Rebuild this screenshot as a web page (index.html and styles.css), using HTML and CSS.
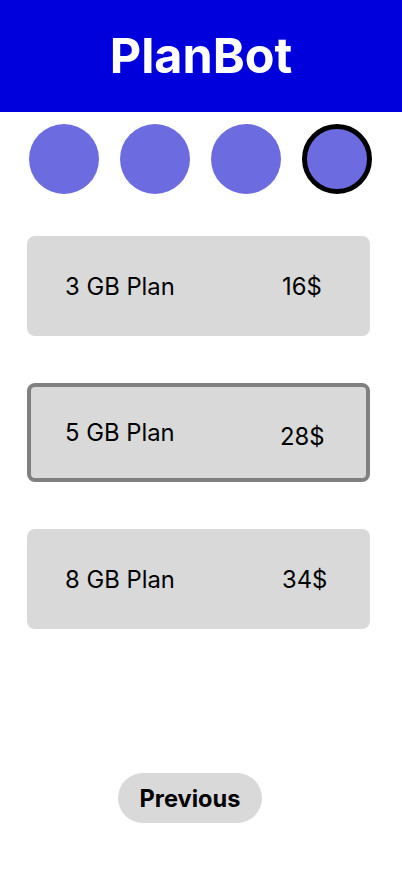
FILE: index.html
```html
<!DOCTYPE html>
<html>
<head>
<meta charset="utf-8">
<link rel="stylesheet" href="styles.css">
</head>
<body>
<header class="header"><h1 class="title">PlanBot</h1></header>
<div class="steps">
  <span class="step"></span>
  <span class="step"></span>
  <span class="step"></span>
  <span class="step step-active"></span>
</div>
<div class="plans">
  <div class="plan"><span class="plan-name">3 GB Plan</span><span class="plan-price">16$</span></div>
  <div class="plan plan-selected"><span class="plan-name">5 GB Plan</span><span class="plan-price">28$</span></div>
  <div class="plan"><span class="plan-name">8 GB Plan</span><span class="plan-price">34$</span></div>
</div>
<div class="actions"><button class="btn">Previous</button></div>
</body>
</html>
```
FILE: styles.css
```css
* { box-sizing: border-box; }
body {
  margin: 0;
  font-family: Inter, "Noto Sans", sans-serif;
  background: #fff;
  color: #000;
}
.header {
  height: 112px;
  background: #0000dc;
  display: flex;
  align-items: center;
  justify-content: center;
}
.title {
  margin: 0;
  color: #fff;
  font-size: 48.5px;
  font-weight: 700;
  line-height: 1;
}
.steps {
  display: flex;
  gap: 21px;
  padding: 12px 0 0 29px;
}
.step {
  width: 70px;
  height: 70px;
  border-radius: 50%;
  background: #6c6ce0;
}
.step-active {
  border: 5px solid #000;
}
.plans {
  display: flex;
  flex-direction: column;
  gap: 47px;
  margin: 42px 0 0 27px;
  width: 343px;
}
.plan {
  height: 100px;
  background: #d9d9d9;
  border-radius: 8px;
  display: flex;
  align-items: center;
  padding-left: 38px;
  font-size: 23.8px;
}
.plan-selected {
  height: 99px;
  border: 4px solid #808080;
  padding-left: 34px;
}
.plan-name {
  width: 217px;
}
.plan-selected .plan-name { width: 215px; }
.plan-selected .plan-price { margin-top: 8px; }
.actions {
  padding: 144px 0 0 118px;
}
.btn {
  width: 144px;
  height: 50px;
  border: none;
  border-radius: 25px;
  background: #d9d9d9;
  font-family: Inter, "Noto Sans", sans-serif;
  font-size: 23.6px;
  font-weight: 700;
  color: #000;
  padding: 0;
}
```
